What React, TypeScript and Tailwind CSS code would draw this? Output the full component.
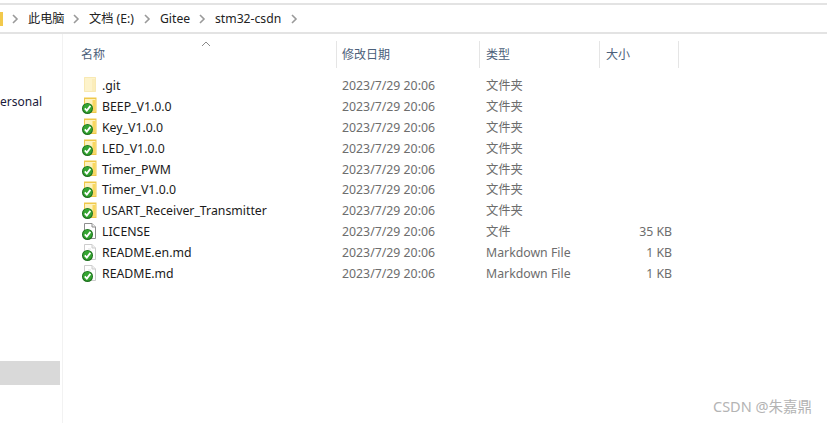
const FONT = "font-['Noto_Sans','Noto_Sans_CJK_SC',sans-serif]";

function Check() {
  return (
    <g>
      <circle cx="7.5" cy="12.5" r="5.5" fill="#1c6f1c" />
      <circle cx="7.5" cy="12.2" r="4.5" fill="#35a531" />
      <path d="M4.8 12.4 L6.8 14.5 L10.4 9.9" fill="none" stroke="#fff" strokeWidth="1.8" />
    </g>
  );
}

function Folder({ ghost, badge }: { ghost?: boolean; badge?: boolean }) {
  return (
    <svg width="20" height="20" viewBox="0 0 20 20" className="shrink-0">
      {ghost ? (
        <g>
          <path d="M4 1 H16 V16 H4 Z" fill="#fdf3cb" />
          <path d="M4.5 1.5 H15.5 V15.5 H4.5 Z" fill="none" stroke="#f8e9b4" />
          <path d="M12 3 H15 V15 H12 Z" fill="#fbedbb" />
        </g>
      ) : (
        <g>
          <path d="M4 1.5 H16.5 V17 H4 Z" fill="#efc84a" />
          <path d="M5 3 H15.5 V15.5 H5 Z" fill="#fdf1bd" />
          <path d="M12.5 4 H15.5 V15.5 H12.5 Z" fill="#f8d75f" />
        </g>
      )}
      {badge && <Check />}
    </svg>
  );
}

function FileIcon({ kind }: { kind: "license" | "md" }) {
  const stroke = kind === "license" ? "#8f8f8f" : "#cdcdcd";
  return (
    <svg width="20" height="20" viewBox="0 0 20 20" className="shrink-0">
      <path d="M4.5 1.5 H12 L15.5 5 V16.5 H4.5 Z" fill="#fff" stroke={stroke} />
      <path d="M12 1.5 V5 H15.5" fill="#f0f0f0" stroke={stroke} />
      {kind === "md" && <path d="M8 6 H11" stroke="#e2e2e2" />}
      <Check />
    </svg>
  );
}

type Row = { name: string; type: string; size?: string; icon: "ghost" | "folder" | "license" | "md" };

const rows: Row[] = [
  { name: ".git", type: "文件夹", icon: "ghost" },
  { name: "BEEP_V1.0.0", type: "文件夹", icon: "folder" },
  { name: "Key_V1.0.0", type: "文件夹", icon: "folder" },
  { name: "LED_V1.0.0", type: "文件夹", icon: "folder" },
  { name: "Timer_PWM", type: "文件夹", icon: "folder" },
  { name: "Timer_V1.0.0", type: "文件夹", icon: "folder" },
  { name: "USART_Receiver_Transmitter", type: "文件夹", icon: "folder" },
  { name: "LICENSE", type: "文件", size: "35 KB", icon: "license" },
  { name: "README.en.md", type: "Markdown File", size: "1 KB", icon: "md" },
  { name: "README.md", type: "Markdown File", size: "1 KB", icon: "md" },
];

function Sep() {
  return (
    <svg width="8" height="10" viewBox="0 0 8 10" className="shrink-0">
      <path d="M2 1 L6 5 L2 9" fill="none" stroke="#9a9a9a" strokeWidth="1.6" />
    </svg>
  );
}

function Crumb({ text, w }: { text: string; w: string }) {
  return <span className={`block whitespace-nowrap ${w}`}>{text}</span>;
}

export default function App() {
  return (
    <div className={`relative h-[423px] w-[827px] overflow-hidden bg-white text-[12px] leading-[21px] ${FONT}`}>
      <div className="mt-[3px] flex h-[31px] items-center border-y-2 border-[#e3e3e3] text-[12.2px] text-[#222]">
        <svg width="4" height="14" viewBox="0 0 4 14" className="shrink-0">
          <path d="M0 0 H3 V14 H0 Z" fill="#f2c94c" />
        </svg>
        <div className="ml-[7px]"><Sep /></div>
        <div className="ml-[9px]"><Crumb text="此电脑" w="w-[37px]" /></div>
        <div className="ml-[7px]"><Sep /></div>
        <div className="ml-[9px]"><Crumb text="文档 (E:)" w="w-[46px]" /></div>
        <div className="ml-[8px]"><Sep /></div>
        <div className="ml-[9px]"><Crumb text="Gitee" w="w-[30px]" /></div>
        <div className="ml-[8px]"><Sep /></div>
        <div className="ml-[9px]"><Crumb text="stm32-csdn" w="w-[67px]" /></div>
        <div className="ml-[8px]"><Sep /></div>
      </div>

      <div className="flex">
        <aside className="flex h-[389px] w-[63px] shrink-0 flex-col border-r border-[#f2f2f2]">
          <div className="mt-[57px] flex h-[21px] justify-end overflow-hidden pr-[20px] text-[#1a1a3a]">
            <span className="whitespace-nowrap">Personal</span>
          </div>
          <div className="mt-[249px] h-[24px] w-[60px] bg-[#d9d9d9]" />
        </aside>

        <main className="relative min-w-0 flex-1 pl-[17px] pt-[7px]">
          <div className="absolute left-[138px] top-[7px]">
            <svg width="10" height="6" viewBox="0 0 10 6">
              <path d="M1 5 L5 1 L9 5" fill="none" stroke="#8a8a8a" />
            </svg>
          </div>
          <div className="grid h-[27px] grid-cols-[256px_143px_120px_80px] text-[#4c607a]">
            <div className="flex items-center pl-[1px]">名称</div>
            <div className="flex items-center border-l border-[#e5e5e5] pl-[5px]">修改日期</div>
            <div className="flex items-center border-l border-[#e5e5e5] pl-[6px]">类型</div>
            <div className="flex items-center border-x border-[#e5e5e5] pl-[6px]">大小</div>
          </div>
          <div className="mt-[7px] text-[12.3px]">
            {rows.map((r) => (
              <div key={r.name} className="grid h-[20.9px] grid-cols-[256px_144px_120px_72px] items-center">
                <div className="flex items-center gap-[2px] whitespace-nowrap text-[#1a1a1a]">
                  {r.icon === "ghost" && <Folder ghost />}
                  {r.icon === "folder" && <Folder badge />}
                  {r.icon === "license" && <FileIcon kind="license" />}
                  {r.icon === "md" && <FileIcon kind="md" />}
                  <span>{r.name}</span>
                </div>
                <div className="pl-[6px] text-[#6d6d6d]">2023/7/29 20:06</div>
                <div className="pl-[6px] text-[#6d6d6d]">{r.type}</div>
                <div className="text-right text-[#6d6d6d]">{r.size}</div>
              </div>
            ))}
          </div>
        </main>
      </div>

      <div className="absolute left-[713px] top-[397px] whitespace-nowrap text-[14.5px] leading-[18px] text-[#b4b4b4]">CSDN @朱嘉鼎</div>
    </div>
  );
}
